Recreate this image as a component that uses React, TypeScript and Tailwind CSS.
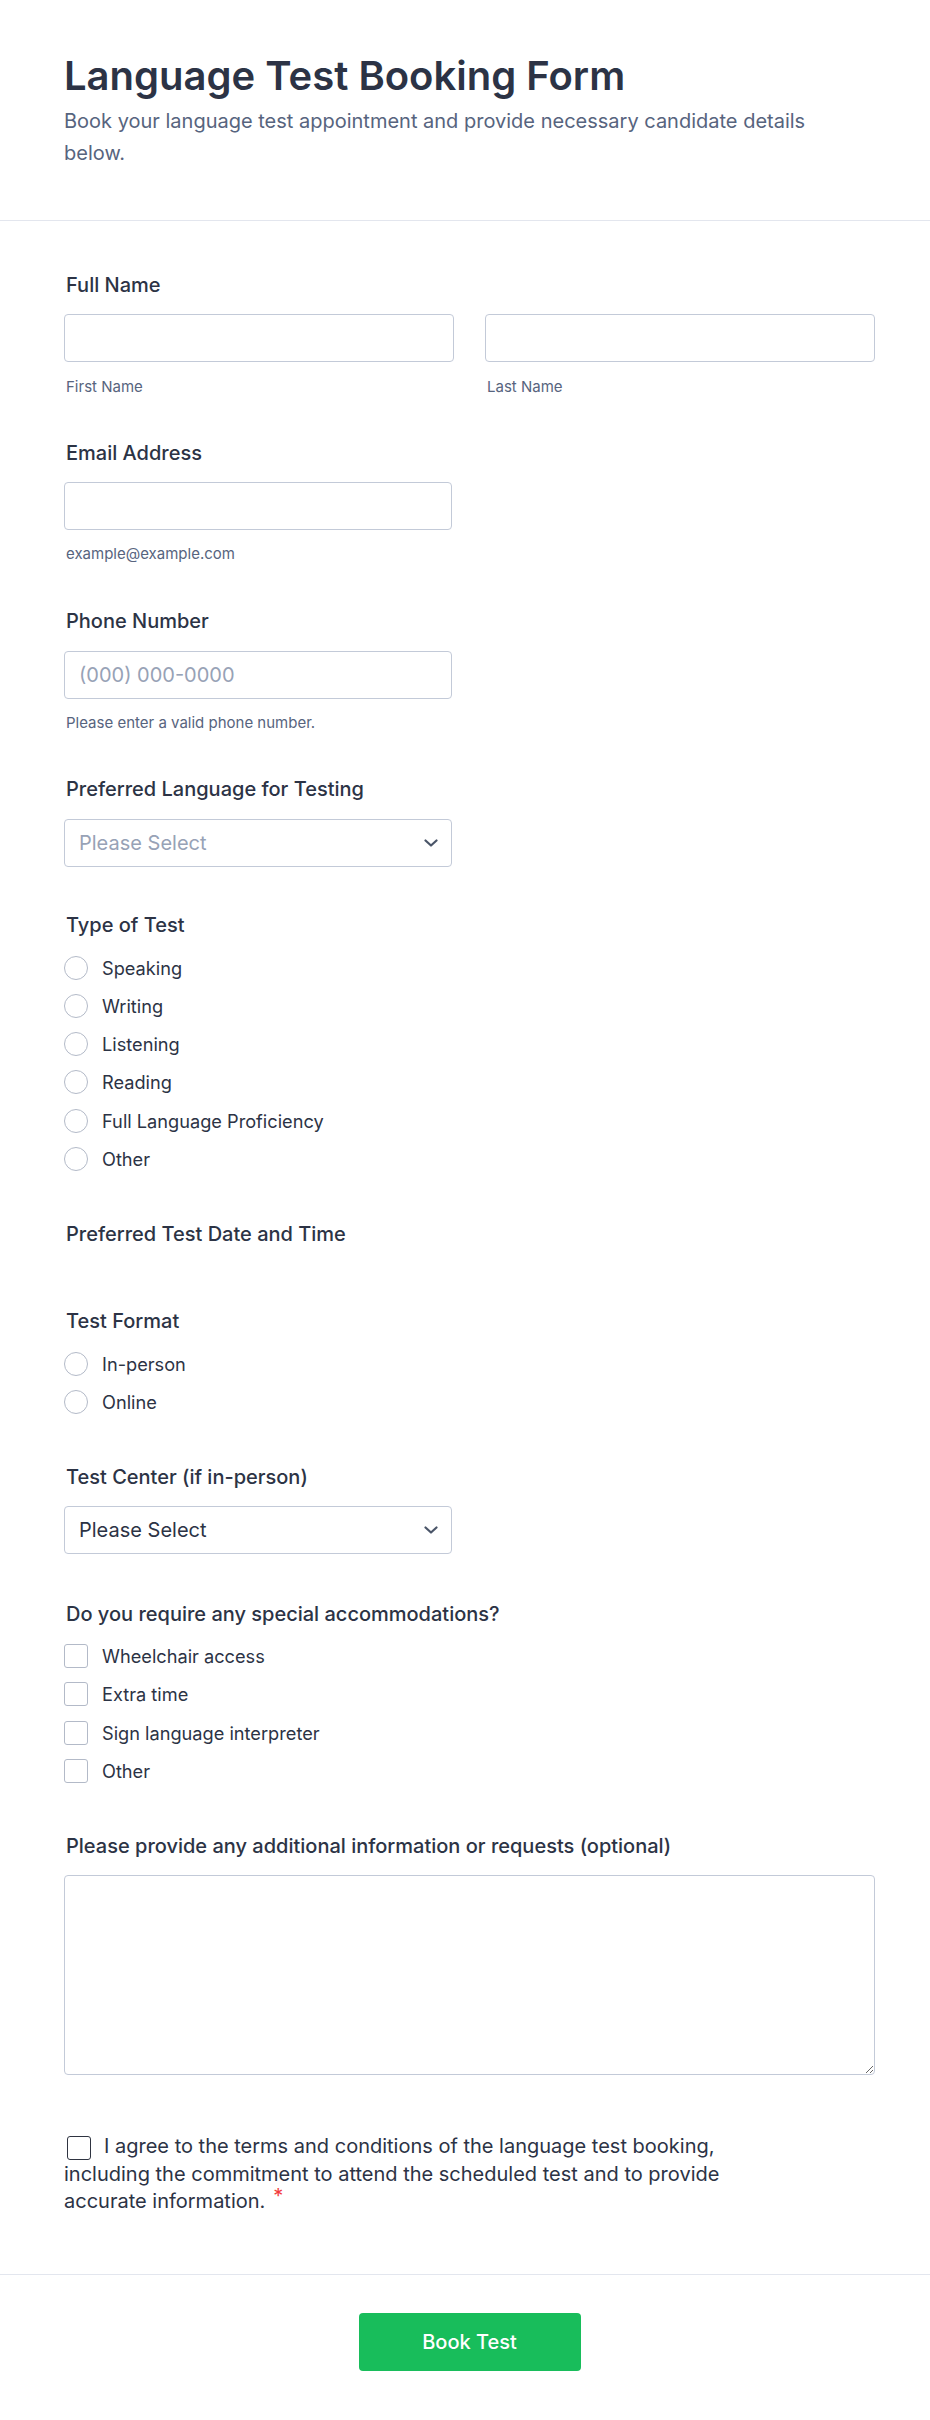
import React from "react";

const font = { fontFamily: "Inter, 'Noto Sans', sans-serif" };

function Label({ children, className = "" }: { children: React.ReactNode; className?: string }) {
  return (
    <div className={`pl-[2px] text-[20px] leading-[28px] font-medium text-[#2c3345] ${className}`}>{children}</div>
  );
}

function Chevron() {
  return (
    <svg width="14" height="8" viewBox="0 0 14 8" fill="none">
      <path d="M1.5 1.5L7 6.5L12.5 1.5" stroke="#4a5568" strokeWidth="2.2" strokeLinecap="round" strokeLinejoin="round" />
    </svg>
  );
}

function Radio({ label }: { label: string }) {
  return (
    <div className="flex items-center h-[24px]">
      <span className="w-[24px] h-[24px] rounded-full border-[1.5px] border-[#b3bac8] bg-white shrink-0" />
      <span className="ml-[14px] text-[18.2px] leading-[24px] text-[#2c3345]">{label}</span>
    </div>
  );
}

function Check({ label }: { label: string }) {
  return (
    <div className="flex items-center h-[24px]">
      <span className="w-[24px] h-[24px] rounded-[3px] border-[1.5px] border-[#b3bac8] bg-white shrink-0" />
      <span className="ml-[14px] text-[18.2px] leading-[24px] text-[#2c3345]">{label}</span>
    </div>
  );
}

function Input({ placeholder = "", className = "" }: { placeholder?: string; className?: string }) {
  return (
    <input
      placeholder={placeholder}
      className={`h-[48px] rounded-[4px] border border-[#c3cad8] bg-white px-[14px] text-[20px] text-[#2c3345] placeholder:text-[#97a2b6] outline-none ${className}`}
      style={font}
    />
  );
}

function Sub({ children }: { children: React.ReactNode }) {
  return <div className="mt-[14.5px] pl-[2px] text-[15px] leading-[20px] text-[#57647e]">{children}</div>;
}

function Select({ text, dim }: { text: string; dim?: boolean }) {
  return (
    <div className="w-[388px] h-[48px] rounded-[4px] border border-[#c3cad8] bg-white flex items-center justify-between pl-[14px] pr-[13px]">
      <span className={`text-[20px] ${dim ? "text-[#97a2b6]" : "text-[#2c3345]"}`}>{text}</span>
      <Chevron />
    </div>
  );
}

export default function App() {
  return (
    <div className="bg-white w-[930px] min-h-[2420px]" style={font}>
      <header className="border-b border-[#e3e6ee] pt-[52px] pb-[51px]">
        <div className="ml-16 w-[811px]">
          <h1 className="text-[40px] leading-[48px] font-semibold text-[#2c3345]">Language Test Booking Form</h1>
          <p className="mt-[5px] max-w-[780px] text-[20px] leading-[32px] text-[#57647e]">
            Book your language test appointment and provide necessary candidate details below.
          </p>
        </div>
      </header>

      <main className="ml-16 w-[811px] pt-[50px] pb-[58px] flex flex-col">
        <div>
          <Label className="mb-[15px]">Full Name</Label>
          <div className="grid grid-cols-2 gap-[31px]">
            <div>
              <Input className="w-full" />
              <Sub>First Name</Sub>
            </div>
            <div>
              <Input className="w-full" />
              <Sub>Last Name</Sub>
            </div>
          </div>
        </div>

        <div className="mt-[42px]">
          <Label className="mb-[15px]">Email Address</Label>
          <Input className="w-[388px]" />
          <Sub>example@example.com</Sub>
        </div>

        <div className="mt-[42.5px]">
          <Label className="mb-[16px]">Phone Number</Label>
          <Input className="w-[388px]" placeholder="(000) 000-0000" />
          <Sub>Please enter a valid phone number.</Sub>
        </div>

        <div className="mt-[42px]">
          <Label className="mb-[15.5px]">Preferred Language for Testing</Label>
          <Select text="Please Select" dim />
        </div>

        <div className="mt-[44.5px]">
          <Label className="mb-[16.5px]">Type of Test</Label>
          <div className="flex flex-col gap-[14.33px]">
            {["Speaking", "Writing", "Listening", "Reading", "Full Language Proficiency", "Other"].map((o) => (
              <Radio key={o} label={o} />
            ))}
          </div>
        </div>

        <div className="mt-[49px]">
          <Label>Preferred Test Date and Time</Label>
        </div>

        <div className="mt-[59px]">
          <Label className="mb-[16.5px]">Test Format</Label>
          <div className="flex flex-col gap-[14.33px]">
            <Radio label="In-person" />
            <Radio label="Online" />
          </div>
        </div>

        <div className="mt-[49px]">
          <Label className="mb-[15.5px]">Test Center (if in-person)</Label>
          <Select text="Please Select" />
        </div>

        <div className="mt-[45.5px]">
          <Label className="mb-[16px]">Do you require any special accommodations?</Label>
          <div className="flex flex-col gap-[14.33px]">
            {["Wheelchair access", "Extra time", "Sign language interpreter", "Other"].map((o) => (
              <Check key={o} label={o} />
            ))}
          </div>
        </div>

        <div className="mt-[49px]">
          <Label className="mb-[15.5px]">Please provide any additional information or requests (optional)</Label>
          <textarea
            className="block w-full h-[200px] rounded-[4px] border border-[#c3cad8] bg-white px-[14px] py-[10px] text-[18px] outline-none"
            style={font}
          />
        </div>

        <div className="mt-[58px] w-[690px] text-[20px] leading-[27.5px] text-[#2c3345]">
          <span className="inline-block w-[24px] h-[24px] rounded-[3px] border-[1.5px] border-[#2f3441] mr-[13px] ml-[3px] align-[-7px]" />
          I agree to the terms and conditions of the language test booking, including the commitment to attend the scheduled test and to provide accurate information.
          <span className="ml-[8px] text-[#f23a3c] text-[20px] relative -top-[5px]">*</span>
        </div>
      </main>

      <footer className="border-t border-[#e3e6ee] pt-[38px] pb-[50px]">
        <div className="ml-16 w-[811px] flex justify-center">
          <button className="w-[222px] h-[58px] rounded-[4px] bg-[#18bd5b] text-white text-[20px] font-medium">
            Book Test
          </button>
        </div>
      </footer>
    </div>
  );
}
